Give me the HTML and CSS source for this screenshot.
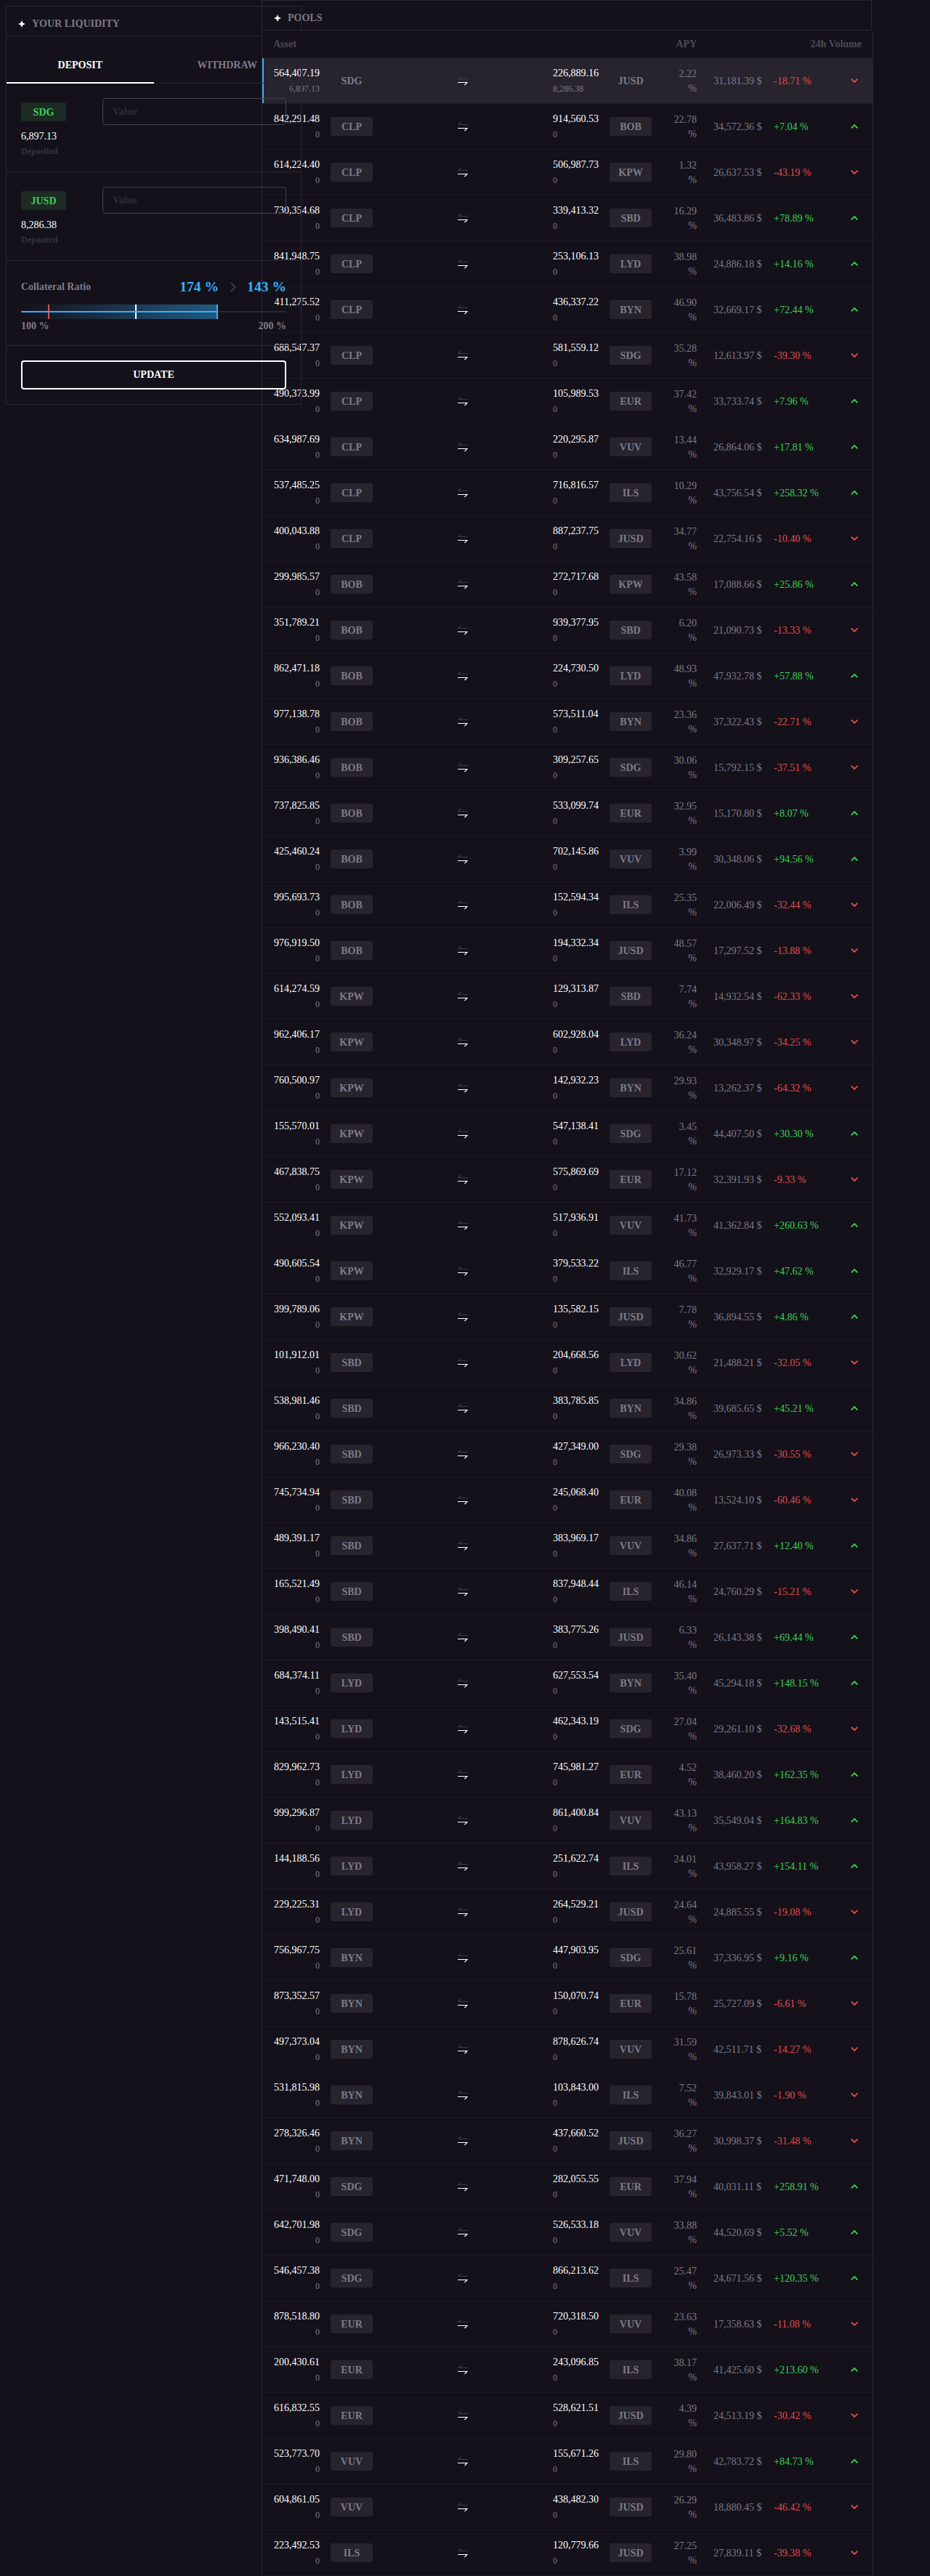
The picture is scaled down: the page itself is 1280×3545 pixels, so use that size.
FILE: index.html
```html
<!DOCTYPE html>
<html lang="en">
<head>
<meta charset="utf-8">
<title>Liquidity pools</title>
<link rel="stylesheet" href="styles.css">
</head>
<body>
<main class="page">
  <section class="liquidity">
    <h2 class="panel-title"><svg class="star" viewBox="0 0 10 10"><path d="M5 0L6.5 3.5L10 5L6.5 6.5L5 10L3.5 6.5L0 5L3.5 3.5Z"/></svg>YOUR LIQUIDITY</h2>
    <nav class="tabs">
      <a class="tab active">DEPOSIT</a>
      <a class="tab">WITHDRAW</a>
    </nav>
    <div class="deposit">
      <div class="deposit-info">
        <span class="badge badge-green">SDG</span>
        <div class="balance">6,897.13</div>
        <div class="caption">Deposited</div>
      </div>
      <input class="field" type="text" placeholder="Value">
    </div>
    <div class="deposit">
      <div class="deposit-info">
        <span class="badge badge-green">JUSD</span>
        <div class="balance">8,286.38</div>
        <div class="caption">Deposited</div>
      </div>
      <input class="field" type="text" placeholder="Value">
    </div>
    <div class="ratio">
      <div class="ratio-head">
        <span class="ratio-label">Collateral Ratio</span>
        <span class="ratio-value">174 %</span>
        <svg class="ratio-arrow" viewBox="0 0 8 14"><path d="M1 1L6.5 7L1 13"/></svg>
        <span class="ratio-value">143 %</span>
      </div>
      <div class="meter">
        <div class="meter-fill"></div>
        <div class="mark mark-red"></div>
        <div class="mark mark-white"></div>
        <div class="meter-line"></div>
      </div>
      <div class="scale"><span>100 %</span><span>200 %</span></div>
    </div>
    <div class="actions"><button class="update">UPDATE</button></div>
  </section>

  <section class="pools">
    <h2 class="panel-title pools-title"><svg class="star" viewBox="0 0 10 10"><path d="M5 0L6.5 3.5L10 5L6.5 6.5L5 10L3.5 6.5L0 5L3.5 3.5Z"/></svg>POOLS</h2>
    <div class="table">
      <div class="thead"><span>Asset</span><span class="th-apy">APY</span><span class="th-volume">24h Volume</span></div>
      <div id="rows"></div>
    </div>
  </section>
</main>
<script src="app.js"></script>
</body>
</html>
```
FILE: styles.css
```css
* { box-sizing: border-box; }

body {
  margin: 0;
  background: #14111a;
  color: #fff;
  font: 14px/20px "Liberation Serif", serif;
}

.page {
  display: grid;
  grid-template-columns: 360px 842px;
  align-items: start;
}

.liquidity {
  z-index: 1;
  width: 407px;
  margin: 8px 0 0 8px;
  border: 1px solid #2a2733;
}

.panel-title {
  display: flex;
  align-items: center;
  gap: 9px;
  height: 41px;
  margin: 0;
  padding: 8px 16px 0;
  border-bottom: 1px solid #2a2733;
  color: #7f7b88;
  font-size: 14px;
  font-weight: bold;
}

.star { width: 10px; height: 10px; margin-bottom: 1px; fill: #fff; }

.tabs { display: flex; height: 65px; }

.tab {
  flex: 1;
  padding-top: 30px;
  border-bottom: 1px solid #2a2733;
  color: #7f7b88;
  font-weight: bold;
  text-align: center;
}

.tab.active { border-bottom: 2px solid #fff; color: #fff; }

.deposit {
  display: flex;
  justify-content: space-between;
  height: 122px;
  padding: 20px 20px 0;
  border-bottom: 1px solid #2a2733;
}

.deposit-info { padding-top: 6px; }

.badge {
  display: block;
  width: 58px;
  height: 26px;
  border-radius: 3px;
  background: #27242e;
  color: #7f7b88;
  font-weight: bold;
  line-height: 27px;
  text-align: center;
}

.badge-green { width: 62px; background: #1c2b23; color: #3bd153; }

.balance { margin-top: 11px; }
.caption { color: #37343f; font-size: 12px; font-weight: bold; }

.field {
  width: 253px;
  height: 37px;
  padding: 0 13px;
  border: 1px solid #45424d;
  border-radius: 4px;
  background: transparent;
  color: #fff;
  font: bold 14px "Liberation Serif", serif;
}

.field::placeholder { color: #2f2c37; opacity: 1; }

.ratio { height: 117px; padding: 25px 20px 0; border-bottom: 1px solid #2a2733; }
.ratio-head { display: flex; align-items: center; height: 22px; }
.ratio-label { flex: 1; color: #7f7b88; font-weight: bold; }
.ratio-value { color: #33b1ff; font-size: 19.6px; font-weight: bold; }

.ratio-arrow {
  width: 8px;
  height: 14px;
  margin: 0 15px 0 16px;
  fill: none;
  stroke: #4c4955;
  stroke-width: 1.5;
}

.meter {
  display: grid;
  grid-template-columns: 37px 120px 114px 1fr;
  height: 20px;
  margin-top: 13px;
  align-items: center;
}

.meter > * { grid-row: 1; }

.meter-fill {
  grid-column: 1 / 4;
  height: 20px;
  border-right: 2px solid #33b1ff;
  background: linear-gradient(90deg, rgba(51, 177, 255, 0) 0%, rgba(51, 177, 255, 0.45) 100%);
}

.mark { width: 2px; height: 20px; }
.mark-red { grid-column: 2; background: #e24d4f; }
.mark-white { grid-column: 3; background: #fff; }

.meter-line {
  grid-column: 1 / 5;
  height: 2px;
  background: linear-gradient(90deg, #33b1ff 271px, #2a2733 271px);
}

.scale {
  display: flex;
  justify-content: space-between;
  color: #7f7b88;
  font-weight: bold;
}

.actions { padding: 20px; }

.update {
  display: block;
  width: 100%;
  height: 40px;
  border: 2px solid #fff;
  border-radius: 4px;
  background: transparent;
  color: #fff;
  font: bold 14px "Liberation Serif", serif;
}

.pools { width: 842px; }

.pools-title {
  width: 840px;
  height: 42px;
  border: 1px solid #2a2733;
}

.table { border: solid #2a2733; border-width: 0 1px; }

.thead {
  position: relative;
  z-index: 2;
  display: grid;
  grid-template-columns: 483px 100px 227px;
  height: 38px;
  padding: 9px 15px 0;
  border-bottom: 1px solid #1e1b26;
  background: #14111a;
  color: #4c4955;
  font-weight: bold;
}

.th-apy, .th-volume { text-align: right; }

.row {
  display: grid;
  grid-template-columns: 63px 58px 218px 63px 58px 55px 68px 91px 10px;
  column-gap: 15px;
  align-items: center;
  height: 63px;
  padding-left: 16px;
  border-bottom: 1px solid #1e1b26;
}

.row.selected { background: #27242e; box-shadow: inset 2px 0 #33b1ff; }

.amount { line-height: 21px; }
.amount small { display: block; margin-top: 1px; color: #7f7b88; font-size: 12px; line-height: 20px; }
.amount.from { text-align: right; }

.swap { justify-self: center; width: 14px; height: 14px; fill: none; stroke-width: 1.2; }
.swap-back { stroke: #3f3c47; }
.swap-forward { stroke: #fff; }

.apy {
  width: 36px;
  margin-right: 8px;
  padding-top: 2px;
  justify-self: end;
  color: #7f7b88;
  text-align: right;
}

.volume, .change { padding-top: 1px; line-height: 21px; white-space: nowrap; }
.volume { color: #7f7b88; }
.chevron { width: 10px; height: 6px; fill: none; stroke: currentColor; stroke-width: 1.8; }
.up { color: #3bd153; }
.down { color: #e24d4f; }
```
FILE: app.js
```js
// from amount, from asset, to amount, to asset, APY, 24h volume, change
const pools = `
564,407.19 SDG 226,889.16 JUSD 2.22 31,181.39 -18.71
842,291.48 CLP 914,560.53 BOB 22.78 34,572.36 +7.04
614,224.40 CLP 506,987.73 KPW 1.32 26,637.53 -43.19
730,354.68 CLP 339,413.32 SBD 16.29 36,483.86 +78.89
841,948.75 CLP 253,106.13 LYD 38.98 24,886.18 +14.16
411,275.52 CLP 436,337.22 BYN 46.90 32,669.17 +72.44
688,547.37 CLP 581,559.12 SDG 35.28 12,613.97 -39.30
490,373.99 CLP 105,989.53 EUR 37.42 33,733.74 +7.96
634,987.69 CLP 220,295.87 VUV 13.44 26,864.06 +17.81
537,485.25 CLP 716,816.57 ILS 10.29 43,756.54 +258.32
400,043.88 CLP 887,237.75 JUSD 34.77 22,754.16 -10.40
299,985.57 BOB 272,717.68 KPW 43.58 17,088.66 +25.86
351,789.21 BOB 939,377.95 SBD 6.20 21,090.73 -13.33
862,471.18 BOB 224,730.50 LYD 48.93 47,932.78 +57.88
977,138.78 BOB 573,511.04 BYN 23.36 37,322.43 -22.71
936,386.46 BOB 309,257.65 SDG 30.06 15,792.15 -37.51
737,825.85 BOB 533,099.74 EUR 32.95 15,170.80 +8.07
425,460.24 BOB 702,145.86 VUV 3.99 30,348.06 +94.56
995,693.73 BOB 152,594.34 ILS 25.35 22,006.49 -32.44
976,919.50 BOB 194,332.34 JUSD 48.57 17,297.52 -13.88
614,274.59 KPW 129,313.87 SBD 7.74 14,932.54 -62.33
962,406.17 KPW 602,928.04 LYD 36.24 30,348.97 -34.25
760,500.97 KPW 142,932.23 BYN 29.93 13,262.37 -64.32
155,570.01 KPW 547,138.41 SDG 3.45 44,407.50 +30.30
467,838.75 KPW 575,869.69 EUR 17.12 32,391.93 -9.33
552,093.41 KPW 517,936.91 VUV 41.73 41,362.84 +260.63
490,605.54 KPW 379,533.22 ILS 46.77 32,929.17 +47.62
399,789.06 KPW 135,582.15 JUSD 7.78 36,894.55 +4.86
101,912.01 SBD 204,668.56 LYD 30.62 21,488.21 -32.05
538,981.46 SBD 383,785.85 BYN 34.86 39,685.65 +45.21
966,230.40 SBD 427,349.00 SDG 29.38 26,973.33 -30.55
745,734.94 SBD 245,068.40 EUR 40.08 13,524.10 -60.46
489,391.17 SBD 383,969.17 VUV 34.86 27,637.71 +12.40
165,521.49 SBD 837,948.44 ILS 46.14 24,760.29 -15.21
398,490.41 SBD 383,775.26 JUSD 6.33 26,143.38 +69.44
684,374.11 LYD 627,553.54 BYN 35.40 45,294.18 +148.15
143,515.41 LYD 462,343.19 SDG 27.04 29,261.10 -32.68
829,962.73 LYD 745,981.27 EUR 4.52 38,460.20 +162.35
999,296.87 LYD 861,400.84 VUV 43.13 35,549.04 +164.83
144,188.56 LYD 251,622.74 ILS 24.01 43,958.27 +154.11
229,225.31 LYD 264,529.21 JUSD 24.64 24,885.55 -19.08
756,967.75 BYN 447,903.95 SDG 25.61 37,336.95 +9.16
873,352.57 BYN 150,070.74 EUR 15.78 25,727.09 -6.61
497,373.04 BYN 878,626.74 VUV 31.59 42,511.71 -14.27
531,815.98 BYN 103,843.00 ILS 7.52 39,843.01 -1.90
278,326.46 BYN 437,660.52 JUSD 36.27 30,998.37 -31.48
471,748.00 SDG 282,055.55 EUR 37.94 40,031.11 +258.91
642,701.98 SDG 526,533.18 VUV 33.88 44,520.69 +5.52
546,457.38 SDG 866,213.62 ILS 25.47 24,671.56 +120.35
878,518.80 EUR 720,318.50 VUV 23.63 17,358.63 -11.08
200,430.61 EUR 243,096.85 ILS 38.17 41,425.60 +213.60
616,832.55 EUR 528,621.51 JUSD 4.39 24,513.19 -30.42
523,773.70 VUV 155,671.26 ILS 29.80 42,783.72 +84.73
604,861.05 VUV 438,482.30 JUSD 26.29 18,880.45 -46.42
223,492.53 ILS 120,779.66 JUSD 27.25 27,839.11 -39.38
`.trim().split("\n").map(line => line.split(" "));

const deposits = ["6,897.13", "8,286.38"];

document.getElementById("rows").innerHTML = pools.map(([a, from, b, to, apy, volume, change], i) => {
  const [depA, depB] = i === 0 ? deposits : ["0", "0"];
  const up = change[0] === "+";
  return `<div class="row${i === 0 ? " selected" : ""}">
    <div class="amount from">${a}<small>${depA}</small></div>
    <span class="badge">${from}</span>
    <svg class="swap" viewBox="0 0 14 14"><path class="swap-back" d="M14 4.5H1L4.5 1"/><path class="swap-forward" d="M0 9.5H13L9.5 13"/></svg>
    <div class="amount">${b}<small>${depB}</small></div>
    <span class="badge">${to}</span>
    <span class="apy">${apy} %</span>
    <span class="volume">${volume} $</span>
    <span class="change ${up ? "up" : "down"}">${change} %</span>
    <svg class="chevron ${up ? "up" : "down"}" viewBox="0 0 10 6"><path d="${up ? "M0.7 5.3L5 1L9.3 5.3" : "M0.7 0.7L5 5L9.3 0.7"}"/></svg>
  </div>`;
}).join("");
```
